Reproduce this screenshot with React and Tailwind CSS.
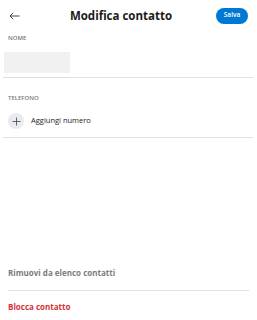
import React from 'react';

const App = () => (
  <div className="flex flex-col w-[257px] h-[320px] bg-white text-[#222]" style={{ fontFamily: '"Open Sans", "Noto Sans", sans-serif' }}>
    <div className="flex items-center h-[30px] pl-[9px] pr-[9px] pt-[1px]">
      <svg width="11" height="8" viewBox="0 0 11 8" className="shrink-0">
        <path d="M10.5 4H1M4.2 0.8L1 4l3.2 3.2" stroke="#333" strokeWidth="0.9" fill="none" />
      </svg>
      <h1 className="flex-1 text-center text-[11.5px] font-bold leading-none text-[#1b1b1b] pl-[6px]">Modifica contatto</h1>
      <button className="w-[32px] h-[16px] rounded-full bg-[#0078d4] text-white text-[6.5px] font-semibold leading-none">Salva</button>
    </div>

    <div className="pl-[8px] pt-[2px] text-[6px] text-[#777] font-semibold leading-none h-[14px] flex items-center">NOME</div>
    <div className="ml-[4px] mt-[8px] w-[66px] h-[21px] bg-[#f1f1f1]"></div>
    <div className="ml-[3px] mr-[4px] mt-[4px] h-px bg-[#e0e0e0]"></div>

    <div className="pl-[8px] mt-[16px] text-[6px] text-[#777] font-semibold leading-none h-[8px] flex items-center">TELEFONO</div>
    <div className="flex items-center gap-[7px] pl-[8px] mt-[11px] h-[16px]">
      <div className="w-[16px] h-[16px] rounded-full bg-[#e9ebef] flex items-center justify-center shrink-0">
        <svg width="9" height="9" viewBox="0 0 9 9">
          <path d="M4.5 0.5v8M0.5 4.5h8" stroke="#444" strokeWidth="0.8" fill="none" />
        </svg>
      </div>
      <span className="text-[7.5px] text-[#222] leading-none">Aggiungi numero</span>
    </div>
    <div className="ml-[3px] mr-[4px] mt-[8px] h-px bg-[#e0e0e0]"></div>

    <div className="flex-1"></div>

    <div className="pl-[8px] text-[8px] font-bold text-[#7c7c7c] leading-none h-[10px] flex items-center">Rimuovi da elenco contatti</div>
    <div className="mx-[8px] mt-[12px] h-px bg-[#e0e0e0]"></div>
    <div className="pl-[8px] mt-[11px] mb-[8px] text-[8px] font-bold text-[#d13438] leading-none h-[10px] flex items-center">Blocca contatto</div>
  </div>
);

export default App;
